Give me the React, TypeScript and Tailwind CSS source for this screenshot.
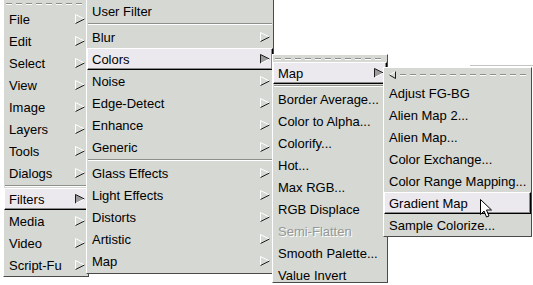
import React from 'react';

type Entry =
    | { kind: 'item'; label: string; sub?: boolean; active?: boolean; disabled?: boolean }
    | { kind: 'sep' };

const it = (label: string, opts: { sub?: boolean; active?: boolean; disabled?: boolean } = {}): Entry => ({ kind: 'item', label, ...opts });
const SEP: Entry = { kind: 'sep' };

const MAIN: Entry[] = [
    it('File', { sub: true }), it('Edit', { sub: true }), it('Select', { sub: true }), it('View', { sub: true }),
    it('Image', { sub: true }), it('Layers', { sub: true }), it('Tools', { sub: true }), it('Dialogs', { sub: true }),
    SEP,
    it('Filters', { sub: true, active: true }),
    it('Media', { sub: true }), it('Video', { sub: true }), it('Script-Fu', { sub: true }),
];

const FILTERS: Entry[] = [
    it('User Filter'),
    SEP,
    it('Blur', { sub: true }), it('Colors', { sub: true, active: true }), it('Noise', { sub: true }),
    it('Edge-Detect', { sub: true }), it('Enhance', { sub: true }), it('Generic', { sub: true }),
    SEP,
    it('Glass Effects', { sub: true }), it('Light Effects', { sub: true }), it('Distorts', { sub: true }),
    it('Artistic', { sub: true }), it('Map', { sub: true }),
];

const COLORS: Entry[] = [
    it('Map', { sub: true, active: true }),
    SEP,
    it('Border Average...'), it('Color to Alpha...'), it('Colorify...'), it('Hot...'), it('Max RGB...'),
    it('RGB Displace'), it('Semi-Flatten', { disabled: true }), it('Smooth Palette...'), it('Value Invert'),
];

const MAP: Entry[] = [
    it('Adjust FG-BG'), it('Alien Map 2...'), it('Alien Map...'), it('Color Exchange...'),
    it('Color Range Mapping...'), it('Gradient Map', { active: true }), it('Sample Colorize...'),
];

// GTK1 style submenu arrow: light upper edges, dark lower edge (inverted when active)
function Arrow({ active }: { active?: boolean }) {
    const hi = active ? '#1c1c1c' : '#ffffff';
    const lo = active ? '#ffffff' : '#1c1c1c';
    return (
        <svg width="10" height="10" viewBox="0 0 10 10" className="shrink-0">
            <polygon points="0.5,0.5 9.5,5 0.5,9.5" fill={active ? '#9c9c9c' : 'none'} />
            <line x1="0.5" y1="0.5" x2="0.5" y2="9.5" stroke={hi} strokeWidth="1" />
            <line x1="0.5" y1="0.5" x2="9.5" y2="5" stroke={hi} strokeWidth="1" />
            <line x1="0.5" y1="9.5" x2="9.5" y2="5" stroke={lo} strokeWidth="1" />
        </svg>
    );
}

function Dashes() {
    return (
        <div className="flex flex-col">
            <div className="h-px bg-[repeating-linear-gradient(90deg,#8d8f8b_0_6px,transparent_6px_10px)]" />
            <div className="h-px bg-[repeating-linear-gradient(90deg,#ffffff_0_6px,transparent_6px_10px)]" />
        </div>
    );
}

function Row({ e }: { e: Entry }) {
    if (e.kind === 'sep') {
        return (
            <div className="h-[4px] shrink-0 flex flex-col justify-center px-px">
                <div className="h-px bg-[#8d8f8b]" />
                <div className="h-px bg-white" />
            </div>
        );
    }
    return (
        <div
            className={`h-[22px] shrink-0 flex items-center justify-between pl-[4px] pr-[2px] border ${e.active
                ? 'bg-[#ebe8ee] border-t-white border-l-white border-b-black border-r-black shadow-[inset_-1px_-1px_0_#8a8a8a]'
                : 'border-transparent'
                }`}
        >
            <span
                className={`whitespace-nowrap ${e.disabled ? 'text-[#979995] [text-shadow:1px_1px_0_#ffffff]' : 'text-black'}`}
            >
                {e.label}
            </span>
            {e.sub && <Arrow active={e.active} />}
        </div>
    );
}

function Menu({ entries, className, tearoff }: { entries: Entry[]; className: string; tearoff?: React.ReactNode }) {
    return (
        <div
            className={`absolute overflow-hidden flex flex-col bg-[#d5d8d3] border border-t-white border-l-white border-r-[#4a4a4a] border-b-[#4a4a4a] ${className}`}
        >
            {tearoff}
            {entries.map((e, i) => (
                <Row key={i} e={e} />
            ))}
        </div>
    );
}

export default function App() {
    return (
        <div className="relative w-[533px] h-[285px] overflow-hidden bg-white font-['Liberation_Sans',Arial,sans-serif] text-[13px] leading-none">
            {/* faint line behind the last submenu */}
            <div className="absolute left-[470px] top-[65px] w-[63px] h-px bg-[#c4c4c4]" />

            <Menu
                entries={MAIN}
                className="left-[3px] top-[-2px] w-[86px] h-[279px]"
                tearoff={
                    <div className="h-[9px] shrink-0 flex flex-col justify-center px-[2px]">
                        <Dashes />
                    </div>
                }
            />

            <Menu entries={FILTERS} className="left-[86px] top-[-1px] w-[188px] h-[275px]" />

            <Menu
                entries={COLORS}
                className="left-[272px] top-[54px] w-[116px] h-[229px]"
                tearoff={
                    <div className="h-[7px] shrink-0 flex flex-col justify-center px-[2px]">
                        <Dashes />
                    </div>
                }
            />

            <Menu
                entries={MAP}
                className="left-[383px] top-[67px] w-[149px] h-[170px]"
                tearoff={
                    <div className="h-[14px] shrink-0 flex items-center gap-[4px] pl-[5px] pr-[2px]">
                        <svg width="7" height="8" viewBox="0 0 7 8" className="shrink-0">
                            <line x1="6.5" y1="0.5" x2="0.5" y2="4" stroke="#ffffff" />
                            <line x1="0.5" y1="4" x2="6.5" y2="7.5" stroke="#1c1c1c" />
                            <line x1="6.5" y1="0.5" x2="6.5" y2="7.5" stroke="#1c1c1c" />
                        </svg>
                        <div className="flex-1">
                            <Dashes />
                        </div>
                    </div>
                }
            />

            {/* mouse pointer */}
            <svg width="13" height="20" viewBox="0 0 13 20" className="absolute left-[480px] top-[199px]">
                <path d="M0.5 0.5 L0.5 15.5 L4 12 L6.5 18 L9 17 L6.5 11 L11.5 11 Z" fill="#ffffff" stroke="#000000" strokeWidth="1" strokeLinejoin="miter" />
            </svg>
        </div>
    );
}
